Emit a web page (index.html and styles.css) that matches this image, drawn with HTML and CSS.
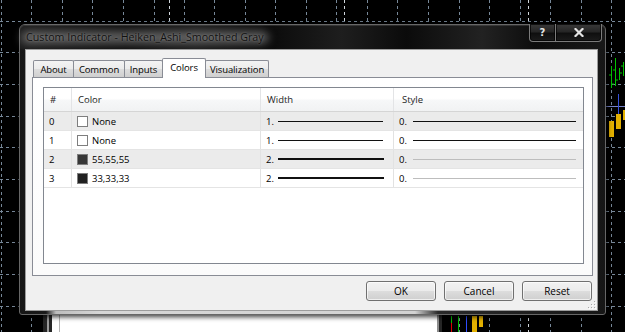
FILE: index.html
```html
<!DOCTYPE html>
<html>
<head>
<meta charset="UTF-8">
    <title>Custom Indicator - Heiken_Ashi_Smoothed Gray</title>
    <link rel="stylesheet" href="styles.css">
</head>
<body>
<div class="desktop">
    <!-- chart behind the dialog -->
    <svg class="chart" width="625" height="332" viewBox="0 0 625 332">
        <path class="grid" d="M1.5 0V332M31.5 0V332M62.5 0V332M92.5 0V332M123.5 0V332M154.5 0V332M184.5 0V332M214.5 0V332M245.5 0V332M275.5 0V332M306.5 0V332M336.5 0V332M367.5 0V332M397.5 0V332M428.5 0V332M459.5 0V332M489.5 0V332M520.5 0V332M550.5 0V332M581.5 0V332M611.5 0V332M0 21.5H625M0 52.5H625M0 84.5H625M0 116.5H625M0 147.5H625M0 179.5H625M0 211.5H625M0 242.5H625M0 274.5H625M0 306.5H625"/>
        <path class="gridSep" d="M169.5 0V332M344.5 0V332M528.5 0V332"/>

        <rect x="43" y="296" width="399" height="36" fill="#262626"/>
        <rect x="47" y="296" width="2" height="36" fill="#9c9c9c"/>
        <rect x="52" y="296" width="385" height="36" fill="#ffffff"/>
        <rect x="437" y="296" width="2" height="36" fill="#8c8c8c"/>
        <rect x="59" y="296" width="1" height="36" fill="#b4b4b4"/>

        <g class="green">
            <path d="M451.5 316V323M458.5 316V332M611.5 66V88M615.5 58V86M619.5 68V80M623.5 62V76M609 75H611.5M611.5 84H614M613 70H615.5M615.5 80H618M619.5 73H622M621 66H623.5"/>
        </g>
        <path d="M451.5 323V332" stroke="#e00000"/>
        <path d="M466.5 316V332" stroke="#2f4dff"/>
        <path d="M606 106.5H625" stroke="#7482c8"/>
        <path d="M618.5 94V122" stroke="#3550d8"/>
        <g fill="#e2b000">
            <rect x="472" y="316" width="5" height="16"/>
            <rect x="479" y="316" width="4" height="11"/>
            <rect x="609" y="121" width="5" height="16"/>
            <rect x="616" y="114" width="5" height="15"/>
            <rect x="623" y="110" width="3" height="10"/>
        </g>
    </svg>

    <div class="dialog">
        <div class="titleBar">
            <span class="titleText">Custom Indicator - Heiken_Ashi_Smoothed Gray</span>
            <div class="captionBtns">
                <div class="capBtn helpBtn">?</div>
                <div class="capBtn closeBtn">
                    <svg width="10" height="9" viewBox="0 0 10 9"><path d="M1.5 1L8.5 8M8.5 1L1.5 8" stroke="#e4e4e4" stroke-width="2.2" stroke-linecap="square"/></svg>
                </div>
            </div>
        </div>

        <div class="client">
            <ul class="tabs">
                <li class="tab tabAbout">About</li>
                <li class="tab tabCommon">Common</li>
                <li class="tab tabInputs">Inputs</li>
                <li class="tab tabColors active">Colors</li>
                <li class="tab tabVis">Visualization</li>
            </ul>

            <div class="panel">
                <div class="list">
                    <div class="lrow lhead">
                        <div class="cell">#</div>
                        <div class="cell">Color</div>
                        <div class="cell">Width</div>
                        <div class="cell">Style</div>
                    </div>
                    <div class="lrow shade">
                        <div class="cell">0</div>
                        <div class="cell"><span class="swatch" style="background:#ffffff"></span>None</div>
                        <div class="cell"><span>1.</span><span class="ln"></span></div>
                        <div class="cell lastCell"><span>0.</span><span class="ln"></span></div>
                    </div>
                    <div class="lrow">
                        <div class="cell">1</div>
                        <div class="cell"><span class="swatch" style="background:#ffffff"></span>None</div>
                        <div class="cell"><span>1.</span><span class="ln"></span></div>
                        <div class="cell lastCell"><span>0.</span><span class="ln"></span></div>
                    </div>
                    <div class="lrow shade">
                        <div class="cell">2</div>
                        <div class="cell"><span class="swatch" style="background:rgb(55,55,55)"></span>55,55,55</div>
                        <div class="cell"><span>2.</span><span class="ln thick"></span></div>
                        <div class="cell lastCell"><span>0.</span><span class="ln off"></span></div>
                    </div>
                    <div class="lrow">
                        <div class="cell">3</div>
                        <div class="cell"><span class="swatch" style="background:rgb(33,33,33)"></span>33,33,33</div>
                        <div class="cell"><span>2.</span><span class="ln thick"></span></div>
                        <div class="cell lastCell"><span>0.</span><span class="ln off"></span></div>
                    </div>
                </div>
            </div>

            <div class="buttons">
                <div class="btn">OK</div>
                <div class="btn">Cancel</div>
                <div class="btn">Reset</div>
            </div>

            <svg class="grip" width="8" height="8" viewBox="0 0 8 8">
                <g fill="#ffffff"><rect x="7" y="1" width="1" height="1"/><rect x="7" y="4" width="1" height="1"/><rect x="4" y="4" width="1" height="1"/><rect x="7" y="7" width="1" height="1"/><rect x="4" y="7" width="1" height="1"/><rect x="1" y="7" width="1" height="1"/></g>
                <g fill="#a8a8a8"><rect x="6" y="0" width="1" height="1"/><rect x="6" y="3" width="1" height="1"/><rect x="3" y="3" width="1" height="1"/><rect x="6" y="6" width="1" height="1"/><rect x="3" y="6" width="1" height="1"/><rect x="0" y="6" width="1" height="1"/></g>
            </svg>
        </div>
    </div>
</div>
</body>
</html>
```

FILE: styles.css
```css
@charset "utf-8";
/* reset */
* { box-sizing: border-box; }
body, div, ul, li { margin: 0; padding: 0; }
ul { list-style: none; }

body {
    width: 625px;
    height: 332px;
    overflow: hidden;
    background: #000;
    font-family: "Segoe UI", "Open Sans", sans-serif;
    font-size: 9.5px;
    color: #000;
}

.desktop {
    position: relative;
    width: 625px;
    height: 332px;
}

/* chart */
.chart {
    position: absolute;
    left: 0;
    top: 0;
}

.chart .grid {
    fill: none;
    stroke: #778899;
    stroke-dasharray: 3 3;
}

.chart .gridSep {
    fill: none;
    stroke: #d0d6dc;
    stroke-dasharray: 3 3;
}

.chart .green path {
    fill: none;
    stroke: #00c400;
}

/* dialog window */
.dialog {
    position: absolute;
    left: 19px;
    top: 24px;
    width: 587px;
    height: 291px;
    display: flex;
    flex-direction: column;
    padding: 0 7px 3px 5px;
    border: 1px solid #676767;
    border-radius: 6px 6px 3px 3px;
    background: linear-gradient(to right, #161616 0, #1a1a1a 26px, #bdbdbd 36px, #d6d6d6 80px, #d2d2d2 395px, #2a2a2a 418px, #161616 100%);
    box-shadow: 0 1px 5px 1px rgba(0, 0, 0, 0.75);
}

.titleBar {
    position: relative;
    height: 24px;
    flex: none;
    margin: 0 -7px 0 -5px;
    padding-left: 6px;
    display: flex;
    align-items: center;
    border-radius: 5px 5px 0 0;
    background: linear-gradient(to right, #1b1b1b 0, #0c0c0c 18%, #191919 30%, #0a0a0a 42%, #1e1e1e 55%, #0b0b0b 66%, #222 79%, #0d0d0d 88%, #181818 100%);
    box-shadow: inset 0 1px 0 rgba(255, 255, 255, 0.12);
}

/* glass title: dark text over a soft light glow */
.titleText {
    position: relative;
    z-index: 0;
    font-size: 10.7px;
    color: #111;
    white-space: nowrap;
    text-shadow: 0 0 2px rgba(255, 255, 255, 0.3);
}

.titleText::before {
    content: "";
    position: absolute;
    left: -5px;
    right: -5px;
    top: 1px;
    bottom: 0;
    z-index: -1;
    border-radius: 8px;
    background: rgba(170, 170, 170, 0.5);
    filter: blur(4px);
}

.captionBtns {
    position: absolute;
    right: 3px;
    top: -1px;
    display: flex;
}

.capBtn {
    height: 18px;
    display: flex;
    align-items: center;
    justify-content: center;
    border: 1px solid #7b7b7b;
    border-top: 0;
    background: linear-gradient(#3a3a3a 0, #262626 45%, #0f0f0f 55%, #1c1c1c 100%);
    box-shadow: inset 0 0 0 1px rgba(0, 0, 0, 0.7);
}

.helpBtn {
    width: 27px;
    border-radius: 0 0 0 4px;
    font: bold 10px "DejaVu Sans", sans-serif;
    color: #e4e4e4;
}

.closeBtn {
    width: 46px;
    border-left: 0;
    border-radius: 0 0 4px 0;
}

/* client area */
.client {
    position: relative;
    flex: 1;
    display: flex;
    flex-direction: column;
    border: 1px solid #9c9c9c;
    background: #f0f0f0;
}

.tabs {
    display: flex;
    align-items: flex-end;
    height: 19px;
    margin: 8px 0 0 7px;
    position: relative;
    z-index: 1;
}

.tab {
    height: 17px;
    margin-right: -1px;
    display: flex;
    align-items: center;
    justify-content: center;
    border: 1px solid #898c95;
    border-bottom: 0;
    border-radius: 2px 2px 0 0;
    background: linear-gradient(#f3f3f3 0, #ebebeb 50%, #dddddd 51%, #cfcfcf 100%);
    white-space: nowrap;
    letter-spacing: -0.1px;
}

.tabAbout { width: 41px; }
.tabCommon { width: 52px; }
.tabInputs { width: 39px; }
.tabColors { width: 44px; }
.tabVis { width: 64px; }

.tab.active {
    height: 20px;
    margin-bottom: -1px;
    padding-bottom: 2px;
    background: #ffffff;
    position: relative;
    z-index: 1;
}

.panel {
    width: 561px;
    height: 199px;
    margin-left: 6px;
    padding: 9px 0 0 10px;
    border: 1px solid #898c95;
    background: linear-gradient(#ffffff 0, #fbfbfb 100%);
}

/* list view */
.list {
    width: 541px;
    height: 177px;
    border: 1px solid #828790;
    background: #ffffff;
}

.lrow {
    display: grid;
    grid-template-columns: 28px 189px 133px 1fr;
    height: 19px;
    border-bottom: 1px solid #e4e4e4;
}

.lrow.shade {
    background: #ebebeb;
}

.cell {
    display: flex;
    align-items: center;
    padding-left: 5px;
    border-right: 1px solid #e2e2e2;
    white-space: nowrap;
}

.lastCell {
    border-right: 0;
}

.lhead {
    height: 24px;
    border-bottom: 1px solid #d5d5d5;
    background: linear-gradient(#ffffff 0, #ffffff 45%, #f6f7f8 55%, #f1f2f3 100%);
}

.lhead .cell {
    padding-left: 6px;
    color: #1e1e1e;
    border-right: 1px solid #e3e4e6;
}

.lhead .cell:last-child {
    padding-left: 8px;
    border-right: 0;
}

.swatch {
    width: 11px;
    height: 11px;
    margin-right: 4px;
    border: 1px solid #7e7e7e;
}

.ln {
    flex: 1;
    height: 1px;
    margin: 0 10px 0 4px;
    background: #111;
}

.lastCell .ln {
    margin-right: 7px;
    margin-left: 6px;
}

.ln.thick {
    height: 2px;
    margin-right: 9px;
}

.ln.off {
    background: #bdbdbd;
}

/* bottom buttons */
.buttons {
    display: flex;
    justify-content: flex-end;
    gap: 8px;
    margin-top: 5px;
    padding-right: 5px;
}

.btn {
    width: 70px;
    height: 20px;
    display: flex;
    align-items: center;
    justify-content: center;
    border: 1px solid #707070;
    border-radius: 3px;
    background: linear-gradient(#f2f2f2 0, #ebebeb 50%, #dddddd 51%, #cfcfcf 100%);
    box-shadow: inset 0 0 0 1px rgba(255, 255, 255, 0.65);
    font-size: 10px;
}

.grip {
    position: absolute;
    right: 1px;
    bottom: 1px;
}
```
